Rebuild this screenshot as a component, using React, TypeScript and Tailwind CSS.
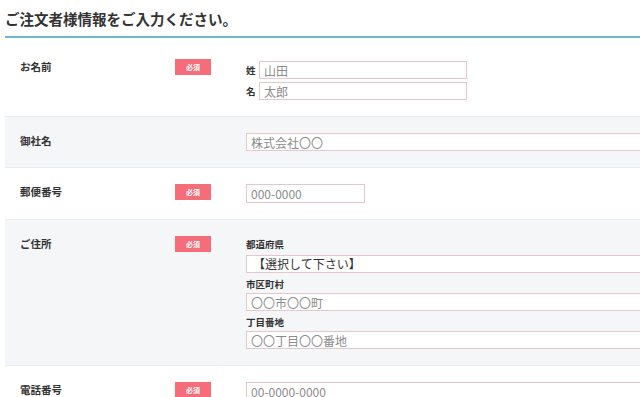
const font = "font-['Noto_Sans_CJK_JP','Noto_Sans',sans-serif]";

function Badge() {
  return (
    <span className="flex h-[16px] w-[36px] items-center justify-center bg-[#f46d78] text-[7px] font-bold leading-none text-white">
      必須
    </span>
  );
}

function Field({ placeholder, className = "" }: { placeholder?: string; className?: string }) {
  return (
    <input
      readOnly
      placeholder={placeholder}
      className={`block h-[18px] border border-[#e5c6cc] bg-white px-[4px] text-[12px] leading-none text-[#333] outline-none placeholder:text-[#8c8c8c] ${font} ${className}`}
    />
  );
}

function Row({
  label,
  required,
  gray,
  children,
}: {
  label: string;
  required?: boolean;
  gray?: boolean;
  children: React.ReactNode;
}) {
  return (
    <div className={`flex border-b border-[#ebedf0] py-[16px] ${gray ? "bg-[#f5f6f8]" : "bg-white"}`}>
      <div className="w-[170px] shrink-0 pl-[15px] text-[10.5px] font-bold leading-[16px] text-[#333]">
        {label}
      </div>
      <div className="w-[71px] shrink-0">{required && <Badge />}</div>
      <div className="flex-1">{children}</div>
    </div>
  );
}

function SubLabel({ children, first }: { children: React.ReactNode; first?: boolean }) {
  return (
    <div className={`text-[9.5px] font-bold leading-[14px] text-[#333] ${first ? "mt-[1px] mb-[4px]" : "mt-[4px] mb-[2px]"}`}>
      {children}
    </div>
  );
}

export default function App() {
  return (
    <div className={`h-[397px] w-[640px] overflow-hidden bg-white ${font}`}>
      <div className="ml-[5px] w-[700px]">
        <h2 className="border-b-2 border-[#6cb8d3] pt-[9px] pb-[7px] text-[14.5px] font-bold leading-[20px] text-[#333]">
          ご注文者様情報をご入力ください。
        </h2>
        <div className="mt-[5px]">
          <Row label="お名前" required>
            <div className="mt-[2px] flex flex-col gap-[3px]">
              <div className="flex items-center gap-[3px]">
                <span className="w-[10px] text-[9.5px] font-bold text-[#333]">姓</span>
                <Field placeholder="山田" className="w-[208px]" />
              </div>
              <div className="flex items-center gap-[3px]">
                <span className="w-[10px] text-[9.5px] font-bold text-[#333]">名</span>
                <Field placeholder="太郎" className="w-[208px]" />
              </div>
            </div>
          </Row>
          <Row label="御社名" gray>
            <Field placeholder="株式会社〇〇" className="w-full" />
          </Row>
          <Row label="郵便番号" required>
            <Field placeholder="000-0000" className="h-[19px] w-[119px]" />
          </Row>
          <Row label="ご住所" required gray>
            <SubLabel first>都道府県</SubLabel>
            <div className="flex h-[18px] w-full items-center border border-[#e5c6cc] bg-white pl-[6px] text-[12px] text-[#333]">
              【選択して下さい】
            </div>
            <SubLabel>市区町村</SubLabel>
            <Field placeholder="〇〇市〇〇町" className="w-full" />
            <SubLabel>丁目番地</SubLabel>
            <Field placeholder="〇〇丁目〇〇番地" className="w-full" />
          </Row>
          <Row label="電話番号" required>
            <Field placeholder="00-0000-0000" className="w-full" />
          </Row>
        </div>
      </div>
    </div>
  );
}
